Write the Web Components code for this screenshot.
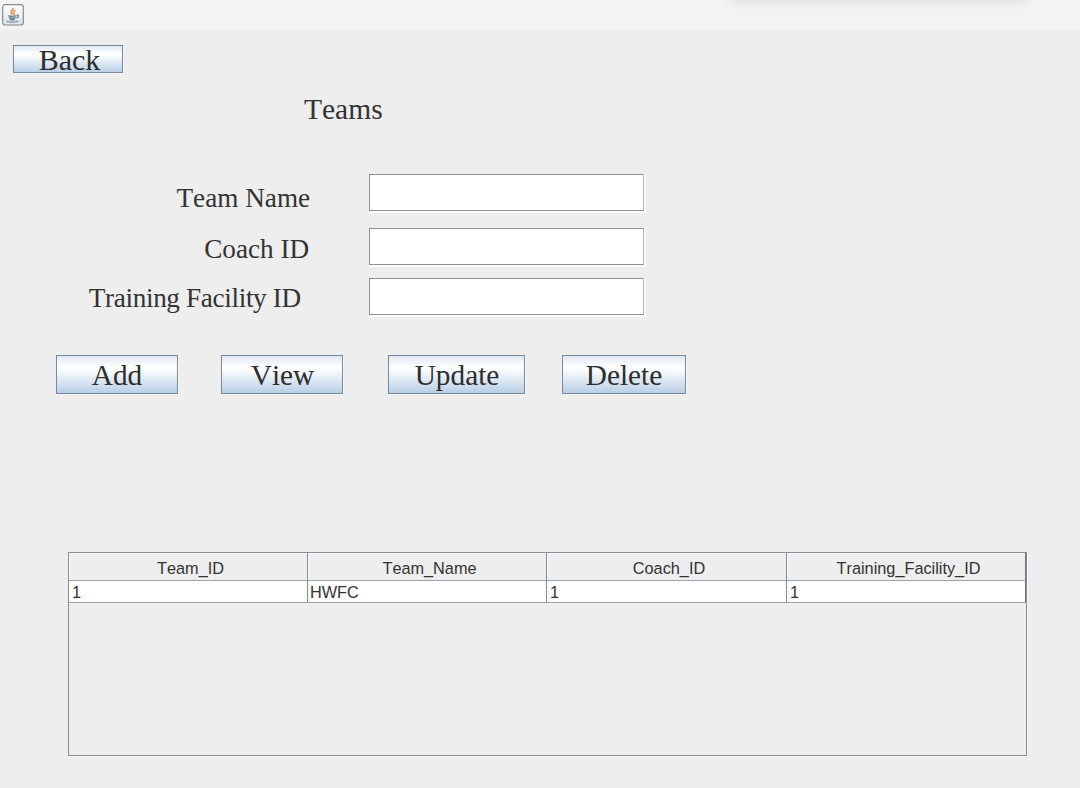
<!DOCTYPE html>
<html lang="en">
<head>
<meta charset="utf-8">
<title>Teams</title>
<style>
html,body{margin:0;height:100%;overflow:hidden;background:#eee}
</style>
</head>
<body>
<teams-window></teams-window>
<script>
function define(name, html) {
  const t = document.createElement('template');
  t.innerHTML = html;
  customElements.define(name, class extends HTMLElement {
    constructor() {
      super();
      this.attachShadow({mode: 'open'}).append(t.content.cloneNode(true));
    }
  });
}

define('java-icon', `<style>:host{display:block;width:22px;height:22px}svg{display:block}</style>
<svg width="22" height="22" viewBox="0 0 22 22" fill="none">
<defs><linearGradient id="g" x1="0" y1="0" x2="0" y2="1"><stop offset="0" stop-color="#fff"/><stop offset="1" stop-color="#dde2e6"/></linearGradient></defs>
<rect x=".7" y=".7" width="20.6" height="20.3" rx="2.4" fill="url(#g)" stroke="#858b90" stroke-width="1.2"/>
<path d="M11.300 3.800c.8 2-3.300 2.900-2.200 5 .3.700 1 1.200 1.300 1.900M13.500 6.300c-2.200 1-2.600 1.900-1.700 3 .5.600.2 1.200-.3 1.600" stroke="#e8954f" stroke-width="1.700"/>
<path d="M6.600 11.500c-1.200.8 6 1 7.800.1M7 13.500c1.800.7 5 .7 6.600 0M7.700 15.300c1.600.6 3.800.6 5.200 0M14.700 11.400c2.400-.6 2.400 2-.3 2.600" stroke="#68889f" stroke-width="1.400"/>
<path d="M4.800 16.700c-.9 1.800 10.100 1.800 11.600.1" stroke="#718da2" stroke-width="1.200"/>
</svg>`);

define('title-bar', `<style>
:host{display:block;height:30px;background:#f3f3f3;padding:4px 0 0 2px;box-sizing:border-box;position:relative;overflow:hidden}
.shade{position:absolute;left:731px;top:-10px;width:294px;height:10px;box-shadow:0 0 8px 2px #e0e0e0}
</style><java-icon></java-icon><div class="shade"></div>`);

define('metal-button', `<style>
:host{display:flex;align-items:center;justify-content:center;box-sizing:border-box;height:39px;border:1px solid #778899;
background:linear-gradient(#dfe9f3 0,#fff 30%,#fafcfe 38%,#b8cfe5 100%);box-shadow:1px 1px 0 #f8f8f8;
font:29.3px/36px "Liberation Serif",serif;font-kerning:none;color:#2d2d2d;white-space:nowrap}
</style><slot></slot>`);

define('form-label', `<style>
:host{display:block;font:27.200px/30px "Liberation Serif",serif;font-kerning:none;color:#333;white-space:nowrap}
</style><slot></slot>`);

define('text-field', `<style>
:host{display:block;box-sizing:border-box;width:275px;height:37px;background:#fff;border:1px solid #8c919a;border-right-color:#b4b6bb;box-shadow:1px 1px 0 1px #fafafa}
</style>`);

define('form-row', `<style>
:host{display:grid;grid-template-columns:auto 275px;justify-content:space-between;align-items:start;height:37px;box-sizing:border-box}
.l{padding-top:var(--drop,0)}
</style><div class="l"><slot></slot></div><text-field></text-field>`);

define('data-cell', `<style>
:host{display:block;box-sizing:border-box;border-right:1px solid #7f8c99;border-bottom:1px solid #9aa4ad;background:#fff;padding-left:3px;line-height:22px;height:22px}
:host([head]){background:#eee;text-align:center;height:28px;line-height:31px;padding:0 0 0 5px;box-shadow:inset 1px 1px 0 #fafafa}
:host([last]){border-right-color:#66798c}
</style><slot></slot>`);

define('data-table', `<style>
:host{display:block;box-sizing:border-box;width:959px;height:204px;border:1px solid #868c93;box-shadow:1px 1px 0 #f8f8f8;
font:16.300px "Liberation Sans",Arial,sans-serif;font-kerning:none;color:#333}
.g{display:grid;grid-template-columns:239px 239px 240px 239px}
</style><div class="g"><slot></slot></div>`);

define('teams-window', `<style>
:host{display:flex;flex-direction:column;width:1080px;height:788px;background:#eee;overflow:hidden}
main{display:flex;flex-direction:column;align-items:flex-start;padding-top:15px}
.back{width:110px;height:28px;margin-left:13px;padding:1px 0 0 3px;font-size:30px}
h1{margin:18px 0 0 304px;font:29.500px/36px "Liberation Serif",serif;font-kerning:none;color:#333}
.form{display:flex;flex-direction:column;margin-top:47px}
.form form-row{margin-left:var(--x);width:calc(644px - var(--x))}
.actions{display:flex;margin:40px 0 0 56px}
data-table{margin:158px 0 0 68px}
</style>
<title-bar></title-bar>
<main>
<metal-button class="back">Back</metal-button>
<h1>Teams</h1>
<div class="form">
<form-row style="--x:176.500px;--drop:9px"><form-label>Team Name</form-label></form-row>
<form-row style="--x:204.200px;--drop:6px;margin-top:17px"><form-label>Coach ID</form-label></form-row>
<form-row style="--x:88.800px;--drop:5px;margin-top:13px"><form-label style="letter-spacing:-.35px">Training Facility ID</form-label></form-row>
</div>
<div class="actions">
<metal-button style="width:122px">Add</metal-button>
<metal-button style="width:122px;margin-left:43px;padding-left:1px">View</metal-button>
<metal-button style="width:137px;margin-left:45px;padding-left:1px">Update</metal-button>
<metal-button style="width:124px;margin-left:37px">Delete</metal-button>
</div>
<data-table>
<data-cell head>Team_ID</data-cell><data-cell head>Team_Name</data-cell><data-cell head>Coach_ID</data-cell><data-cell head last>Training_Facility_ID</data-cell>
<data-cell>1</data-cell><data-cell style="padding-left:2px">HWFC</data-cell><data-cell>1</data-cell><data-cell last>1</data-cell>
</data-table>
</main>`);
</script>
</body>
</html>
